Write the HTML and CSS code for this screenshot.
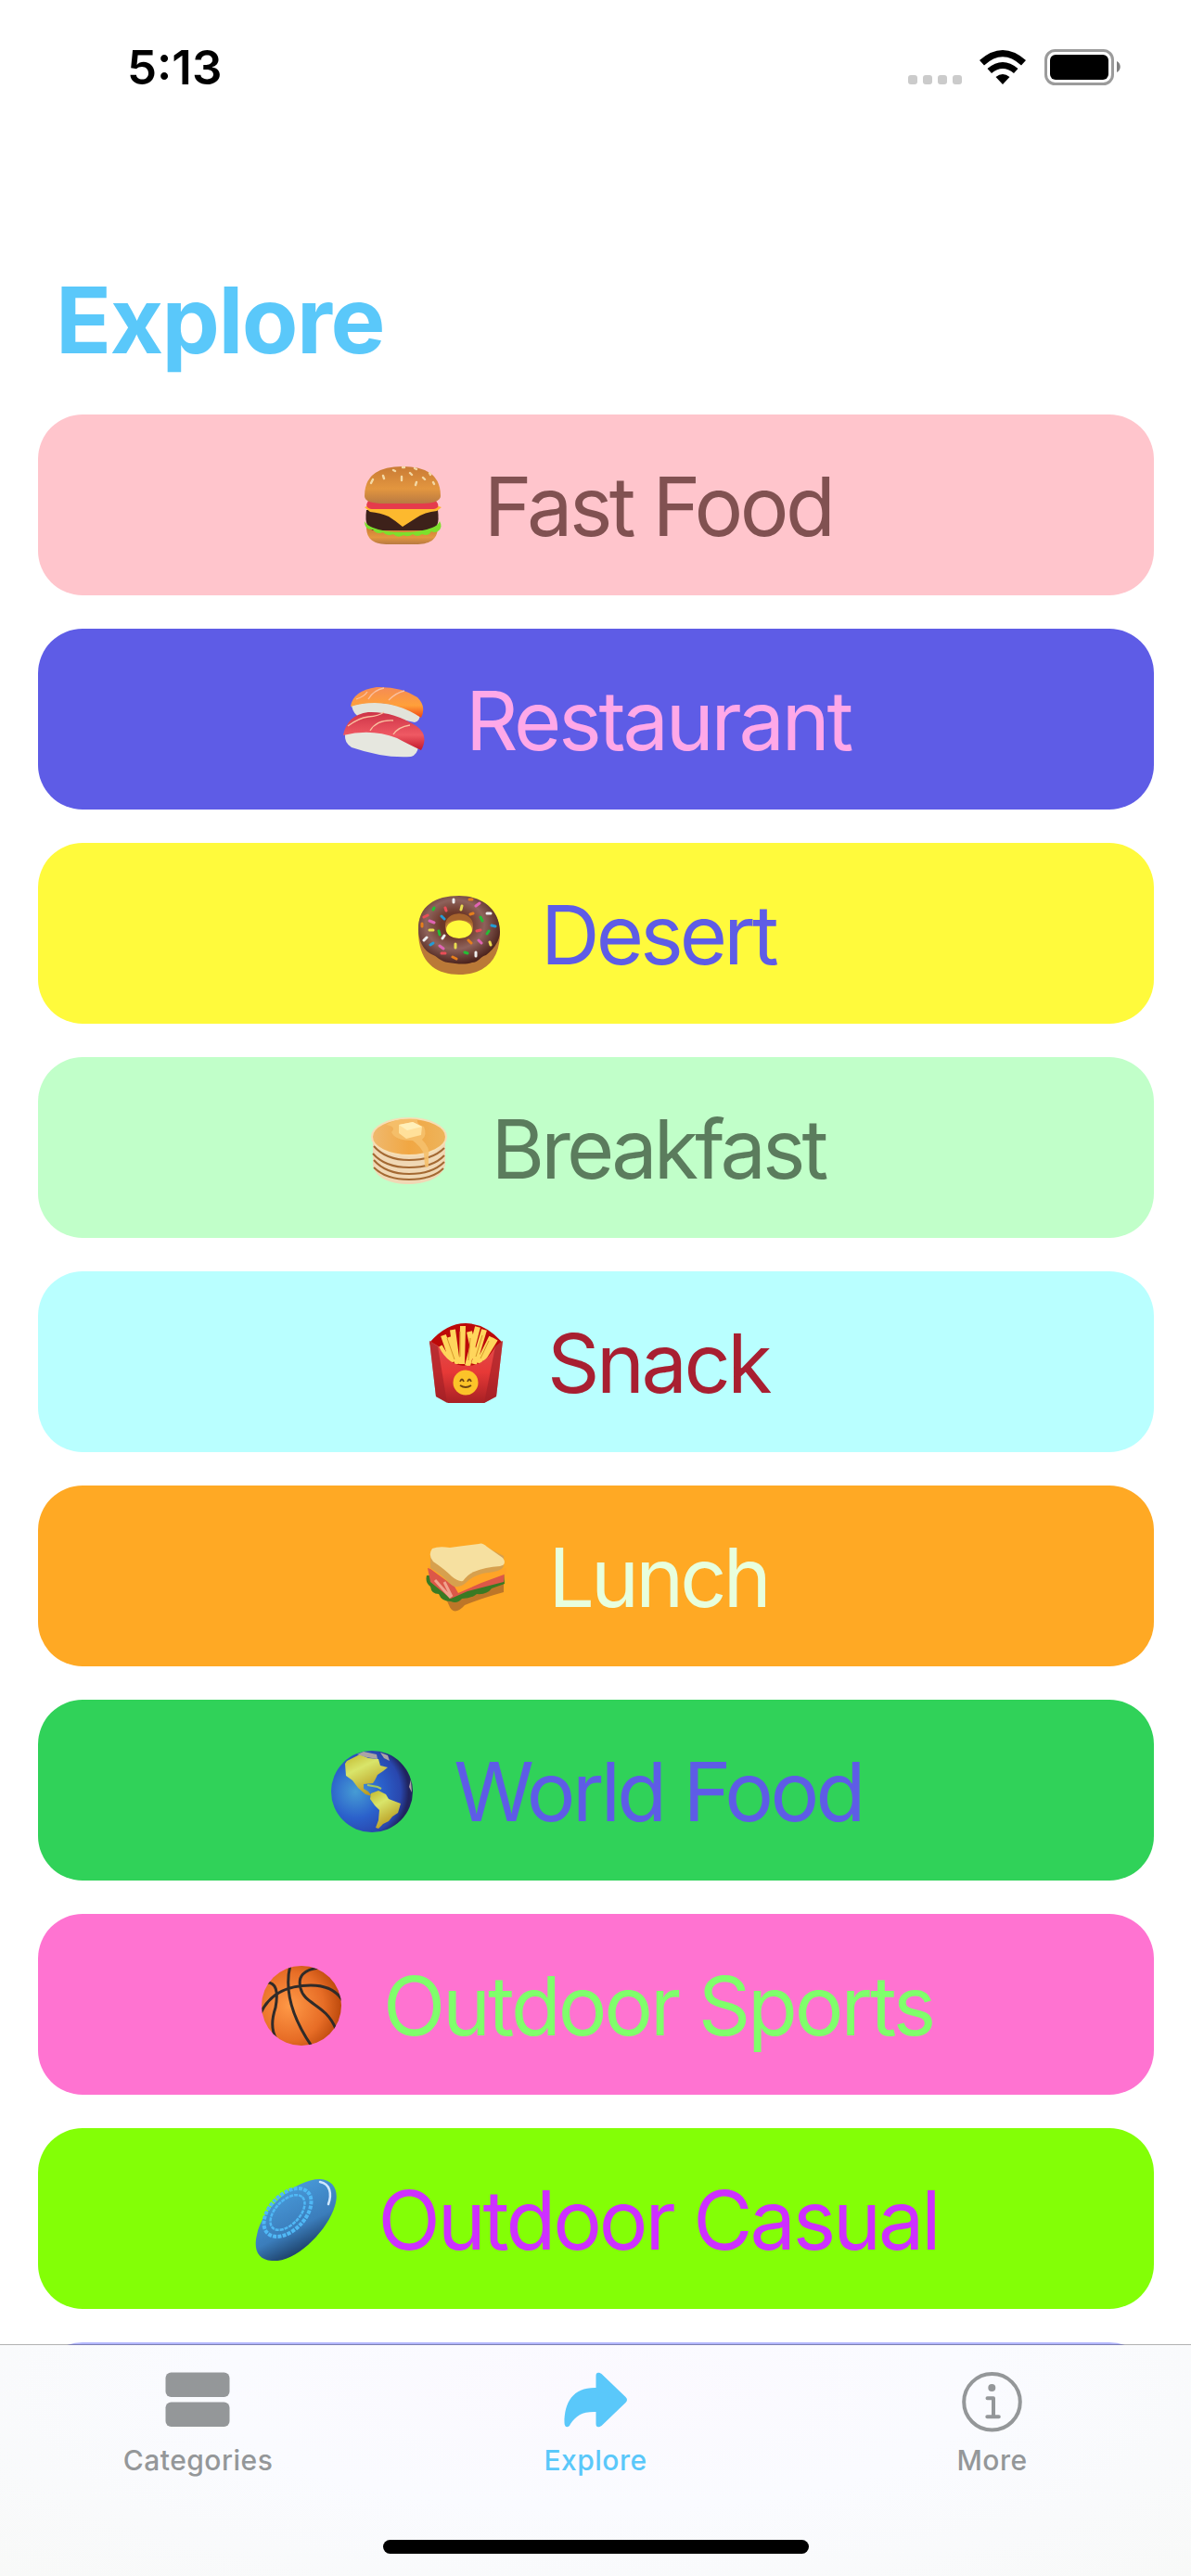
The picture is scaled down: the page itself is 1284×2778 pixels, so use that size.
FILE: index.html
```
<!DOCTYPE html>
<html lang="en">
<head>
<meta charset="utf-8">
<title>Explore</title>
<link rel="stylesheet" href="styles.css">
</head>
<body>
<div class="screen">
  <header class="status">
    <span class="time">5:13</span>
    <span class="status-icons">
      <svg class="signal" viewBox="0 0 58 10" fill="#cbcbcb"><rect width="10" height="10" rx="3"/><rect x="16" width="10" height="10" rx="3"/><rect x="32" width="10" height="10" rx="3"/><rect x="48" width="10" height="10" rx="3"/></svg>
      <svg class="wifi" viewBox="0 0 50 37"><path d="M0 11Q25-11 50 11L45 16.500Q25-2 5 16.500ZM8.500 20Q25 6 41.500 20L37 25Q25 15 13 25ZM17.500 29Q25 23 32.500 29L25 37Z"/></svg>
      <svg class="battery" viewBox="0 0 83 40"><rect x="1.500" y="1.500" width="72" height="36" rx="10" fill="none" stroke="#9b9b9b" stroke-width="3"/><rect x="6" y="6" width="63" height="27" rx="6"/><path d="M78 13c5 2 5 10 0 12z" fill="#808080"/></svg>
    </span>
  </header>
  <h1 class="title">Explore</h1>
  <main class="list">
    <a class="card fast-food">
      <svg class="emoji" viewBox="0 0 88 88">
        <defs><linearGradient id="bun" x2="0" y2="1"><stop stop-color="#c97b35"/><stop offset=".6" stop-color="#e3963f"/><stop offset="1" stop-color="#b97a42"/></linearGradient></defs>
        <path d="M5 66h77c0 15-10 19-24 19H29C13 85 5 80 5 66z" fill="url(#bun)"/>
        <path d="M5 48h77q3 22-9 22H15Q2 70 5 48z" fill="#3d211a"/>
        <path d="M3 60q3 5 9 7 12 5 32 5t32-5q6-2 8-7 4 7-2 11-4 2-7 0-3 6-10 3-5 4-10 0-5 4-10 1-6 4-11-1-7 3-11-2-7 3-11-3-9 1-9-9z" fill="#7de02c"/>
        <path d="M3 45l8-3h66l9 3-5 4q-13 1-23 8L44 66q-7-6-15-11-9-4-20-5z" fill="#fdb92e"/>
        <path d="M7 38h73q6 8-3 9H11q-9-1-4-9z" fill="#e53b4c"/>
        <path d="M3 33Q3 1 44 1t41 32c0 5-8 8-20 8H24C12 41 3 39 3 33z" fill="url(#bun)"/>
        <g stroke="#f3d8a4" stroke-width="2.400" stroke-linecap="round"><path d="M12 15l-2 4M23 11l1 3M34 5l2 1M43 12v4M52 8l2 2M59 18l-1 3M66 13l2 2M57 3l2 1M73 8l1 2M77 18l1 2M44 2h2"/></g>
      </svg><span>Fast Food</span></a>
    <a class="card restaurant">
      <svg class="emoji" viewBox="0 0 88 88">
        <defs><linearGradient id="salmon" x2="0" y2="1"><stop stop-color="#f58b55"/><stop offset=".6" stop-color="#ffa03a"/><stop offset="1" stop-color="#f04610"/></linearGradient><linearGradient id="tuna" x2="0" y2="1"><stop stop-color="#cd3347"/><stop offset=".6" stop-color="#ef5963"/><stop offset="1" stop-color="#c2182c"/></linearGradient></defs>
        <path d="M9 28q30-10 74 8 0 9-6 10-34-8-60-6-6-3-8-12z" fill="#e2e3da"/>
        <path d="M8 29Q10 12 36 8q26-1 44 11 10 10 4 22Q60 25 34 25 20 25 8 29z" fill="url(#salmon)"/>
        <path d="M2 59q-1 9 7 14 35 12 64 10 7-2 8-11Q44 43 2 59z" fill="#e6e7df"/>
        <path d="M0 60Q4 38 27 35q27-1 52 15 14 10 5 26Q69 69 58 63 30 52 0 60z" fill="url(#tuna)"/>
        <g fill="none" stroke="#fac0a0" stroke-width="1.300"><path d="M27 21q6-10 17-12M49 22q8-8 17-10M14 21q9-3 12-8M5 50q12-9 22-10 12-1 17-5M29 55q7-12 25-11M54 59q5-8 18-10"/></g>
      </svg><span>Restaurant</span></a>
    <a class="card desert">
      <svg class="emoji" viewBox="0 0 88 88">
        <defs><radialGradient id="glaze" cx=".45" cy=".42" r=".58"><stop offset=".3" stop-color="#6b3728"/><stop offset=".62" stop-color="#8e625b"/><stop offset="1" stop-color="#4d241d"/></radialGradient></defs>
        <path fill-rule="evenodd" d="M0 40C0 12 17 5 44 5s44 13 44 37c0 30-17 45-44 45S0 72 0 40zm30-1c0 12 28 12 28 0 0-14-28-14-28 0z" fill="#ba7937"/>
        <path fill-rule="evenodd" d="M0 38C0 13 18 2 44 2s44 16 44 39c0 10-8 20-15 25-6 1-8 8-15 8-8 3-18 1-26 0-8-1-12-7-18-9C6 61 0 51 0 38zm29-2c0 16 30 16 30 0 0-19-30-19-30 0z" fill="url(#glaze)"/>
        <path d="M29 34c0-17 30-17 30 0-3-8-27-8-30 0z" fill="#a6642d"/>
        <g stroke-width="3" stroke-linecap="round"><path stroke="#eee" d="M38 6v3M74 21h4M6 50l3-3M26 48l2-3M62 63v4"/><path stroke="#e94e57" d="M6 25l4-2M29 15l1 3M63 40l4-1M25 64h4"/><path stroke="#24bd34" d="M16 17l1-2M67 25l2 4M22 40l1 4M74 43l2-3M50 63l3 1"/><path stroke="#e8dc4f" d="M47 13l-1 4M12 39h4M40 54v4M77 52l1 3"/><path stroke="#e064b3" d="M62 13l4-3M12 29l5 2M65 50l3 3M23 56l4 3"/><path stroke="#249bd4" d="M25 24l3 3M79 34l4 1M13 55l3-2"/><path stroke="#e67e1c" d="M55 6h3M4 32v3M56 22l3-1M54 50l3 3M37 68l4 2"/></g>
      </svg><span>Desert</span></a>
    <a class="card breakfast">
      <svg class="emoji" viewBox="0 0 88 88">
        <defs><linearGradient id="cake"><stop stop-color="#efb96f"/><stop offset=".5" stop-color="#f1a743"/><stop offset="1" stop-color="#edb45c"/></linearGradient></defs>
        <path d="M4 33v29c4 16 23 20 39 20s36-6 39-21V31z" fill="#f0d8b5"/>
        <g fill="none" stroke="#a46932" stroke-width="2"><path d="M5 41q13 15 38 15t38-13M4 49q13 15 39 15t38-13M5 56q13 15 38 15t38-13M5 64q13 13 38 13t37-12"/></g>
        <ellipse cx="43" cy="31" rx="40" ry="20" fill="url(#cake)" stroke="#f6deb5" stroke-width="2"/>
        <path d="M18 18q13-8 34-6-1 6 7 8 4 9-2 14 9 9 7 17v11q-2 4-4 0l-1-13q-4-8-12-14-19 0-23-9 6-6-6-8z" fill="#f5c06b" opacity=".9"/>
        <path d="M32 18l15-3 10 5-1 9-16 4-8-6z" fill="#ffe09a"/><path d="M32 18l15-3 10 5-16 4z" fill="#fff0b9"/>
      </svg><span>Breakfast</span></a>
    <a class="card snack">
      <svg class="emoji" viewBox="0 0 88 88">
        <defs><linearGradient id="box" x2="0" y2="1"><stop stop-color="#e04c4d"/><stop offset=".5" stop-color="#e73937"/><stop offset="1" stop-color="#a82024"/></linearGradient></defs>
        <path d="M5 22Q23 1 44 1t39 20l-8 26H14z" fill="#bc0909"/>
        <g stroke="#ffd65c" stroke-width="6"><path d="M20 14l10 29M30 8l5 37M41 4l-1 41M57 5L46 47M64 8L53 45M72 16L58 44M16 26l10 17M76 18L62 41M48 10l7 32M26 16l10 28"/></g><g stroke="#d7972a" stroke-width="1"><path d="M24 17l8 23M38 10v27M49 17l-2 24M62 14l-7 23M69 20l-9 19"/></g>
        <path d="M5 20l10 6q10 21 30 21t31-21l8-6-7 60-13 7H25l-13-7z" fill="url(#box)"/>
        <path d="M5 20l9 6 10 61-12-7zm79 0l-8 6-12 61 13-7z" fill="#a32026" opacity=".65"/>
        <circle cx="44" cy="65" r="13.500" fill="#fcc329"/><g fill="none" stroke="#704411" stroke-width="1.800"><path d="M38 64q2-5 4 0M46 64q2-5 4 0M38 68q6 4 12 0"/></g>
      </svg><span>Snack</span></a>
    <a class="card lunch">
      <svg class="emoji" viewBox="0 0 88 88">
        <path d="M3 47q13 6 22 27c3 9 10 8 17 0q17-7 42-14V42z" fill="#bd7628"/>
        <path d="M1 42q-2 8 4 12 1 8 9 8 3 8 13 8 7 3 12-3 10 0 16-5 11 1 16-6l14-5-1-12z" fill="#397a23"/>
        <path d="M2 34l3 15 22 18 18-8 39-10 1-12-42 8z" fill="#dc5748"/><path d="M10 47l17 19M20 49l8 16" stroke="#f0a28d" stroke-width="3"/>
        <path d="M1 32l30 22 4 7 25-11 27-10v-6L45 42z" fill="#ffa427"/>
        <path d="M5 18v16q12 7 20 16 8 8 17 1 9-10 25-12 17-2 17-8V21L59 8 25 20z" fill="#d7a04e"/>
        <path d="M7 13q7-3 19-1Q43 10 57 8q4-2 9 3l17 12q5 7-3 9-16 1-28 6-6 2-12 10-5 1-12-5-8-8-20-16-6-7-1-14z" fill="#f6e0a0"/>
      </svg><span>Lunch</span></a>
    <a class="card world-food">
      <svg class="emoji" viewBox="0 0 88 88">
        <defs><radialGradient id="sea" cx=".3" cy=".5" r=".65"><stop stop-color="#469cd4"/><stop offset=".5" stop-color="#2b61cb"/><stop offset=".85" stop-color="#2947ae"/><stop offset="1" stop-color="#20245f"/></radialGradient><linearGradient id="land" x2=".5" y2="1"><stop stop-color="#c2b72d"/><stop offset=".4" stop-color="#d9e56a"/><stop offset="1" stop-color="#b9981f"/></linearGradient></defs>
        <circle cx="44" cy="44" r="44" fill="url(#sea)"/>
        <path d="M17 11l14-7 9 4 11 1 2 7 8 2-5 4-6 4-3 6-2 3-10 1v5l5 3 4 5-7-2-8-7-6-8-7-5-1-13z" fill="url(#land)"/>
        <path d="M43 46l8-3 8 4 3 5 13 5-3 10-6 4-4 5-6 3-5 5-3-1 3-8 1-11-5-5-5-7z" fill="url(#land)"/><path d="M28 4l7-3 14 3 1 5-12-2zm25-2l8 3 2 6-6-3zM86 31l1 14-3-6z" fill="#aaa4a4"/><path d="M39 37l11 2 4 2" stroke="#a5c85e" stroke-width="2" fill="none"/>
      </svg><span>World Food</span></a>
    <a class="card outdoor-sports">
      <svg class="emoji" viewBox="0 0 88 88">
        <defs><radialGradient id="ball" cx=".35" cy=".5" r=".66"><stop stop-color="#ff9947"/><stop offset=".65" stop-color="#e76d26"/><stop offset="1" stop-color="#bb480b"/></radialGradient><clipPath id="ball-clip"><circle cx="44" cy="44" r="43"/></clipPath></defs>
        <circle cx="44" cy="44" r="43" fill="url(#ball)"/><g clip-path="url(#ball-clip)" fill="none" stroke="#302b29" stroke-width="3"><path d="M0 52Q14 22 54 22q24 0 34 16M32 0Q22 40 56 89M63 3Q38 6 43 25c4 18 27 17 38 44M7 19q14 0 9 27-7 21 1 34"/></g>
      </svg><span>Outdoor Sports</span></a>
    <a class="card outdoor-casual">
      <svg class="emoji" viewBox="0 0 88 88">
        <defs><linearGradient id="disc" x1=".3" y1=".1" x2=".7" y2=".9"><stop stop-color="#499bdb"/><stop offset=".6" stop-color="#3b7dbb"/><stop offset="1" stop-color="#173458"/></linearGradient></defs>
        <path d="M2 60C7 32 43 0 70 0c15 1 21 13 16 29C78 56 43 91 18 88 3 87-2 76 2 60z" fill="url(#disc)"/>
        <path d="M70 3c11 2 13 13 9 24" fill="none" stroke="#d0e9ff" stroke-width="2.500" stroke-linecap="round"/>
        <g fill="none" stroke="#50b8f5"><ellipse cx="35" cy="36" rx="31" ry="19" transform="rotate(-46 35 36)" stroke-width="4" stroke-dasharray="4 1.300"/><ellipse cx="35" cy="36" rx="23" ry="13" transform="rotate(-46 35 36)" stroke-width="2.500" stroke-dasharray="4 1"/></g>
      </svg><span>Outdoor Casual</span></a>
    <a class="card next"></a>
  </main>
  <nav class="tabs">
    <a class="tab"><svg class="tab-icon" viewBox="0 0 72 68" fill="currentColor"><rect x="1.500" y="1.500" width="69" height="26.500" rx="6"/><rect x="1.500" y="33.500" width="69" height="26.500" rx="6"/></svg><span>Categories</span></a>
    <a class="tab active"><svg class="tab-icon" viewBox="0 0 72 68" fill="currentColor"><path d="M36.500 18V5c0-4 3-4 6-2l26 25q3 3 0 6L42.500 59c-3 2-6 2-6-2V44C22 43.500 15 48 9 57c-2 5-6.500 4-6.500-1C2.500 33 12 17.500 36.500 18z"/></svg><span>Explore</span></a>
    <a class="tab"><svg class="tab-icon" viewBox="0 0 72 68"><circle cx="35.500" cy="33.300" r="30.300" fill="none" stroke="currentColor" stroke-width="4"/><circle cx="35.300" cy="18" r="4" fill="currentColor"/><path d="M30.500 29.300h6.500v20M30.300 49.300h12.500" fill="none" stroke="currentColor" stroke-width="4" stroke-linecap="round" stroke-linejoin="round"/></svg><span>More</span></a>
    <div class="home-bar"></div>
  </nav>
</div>
</body>
</html>
```
FILE: styles.css
```
* { box-sizing: border-box; }
body { margin: 0; background: #fff; font-family: Inter, "Liberation Sans", sans-serif; }
svg { display: block; }
.screen { width: 1284px; height: 2778px; display: flex; flex-direction: column; overflow: hidden; }
.status { height: 144px; flex: none; display: flex; justify-content: space-between; padding: 0 75px 0 137px; }
.time { font-size: 51px; line-height: 60px; font-weight: 600; margin-top: 43px; }
.status-icons { display: flex; align-items: flex-start; padding-top: 53px; }
.signal { width: 58px; height: 10px; margin: 28px 19px 0 0; }
.wifi { width: 50px; height: 37px; margin: 1px 20px 0 0; }
.battery { width: 83px; height: 40px; }
.title { margin: 0; flex: none; height: 303px; padding: 141px 0 0 60px; font-size: 99px; line-height: 120px; font-weight: 700; letter-spacing: -1.5px; color: #5ac8fa; }
.list { flex: 1; min-height: 0; overflow: hidden; display: flex; flex-direction: column; gap: 36px; padding: 0 40px 0 41px; }
.card { flex: none; height: 195px; border-radius: 48px; display: flex; justify-content: center; align-items: center; gap: 44px; font-size: 88px; line-height: 108px; letter-spacing: -3.5px; white-space: nowrap; padding: 2px 4px 0 0; }
.emoji { width: 88px; height: 88px; flex: none; margin-left: 6px; }
.fast-food { background: #ffc5cc; color: #815151; }
.restaurant { background: #5e5ce6; color: #ffa8e8; letter-spacing: -3.2px; }
.desert { background: #fffa3c; color: #5e5ce6; letter-spacing: -3.8px; }
.breakfast { background: #c1ffc9; color: #5b7c5d; letter-spacing: -3.9px; }
.snack { background: #b9ffff; color: #a81f31; }
.lunch { background: #ffa924; color: #e8ffdd; letter-spacing: -3.9px; }
.world-food { background: #30d259; color: #5e5ce6; letter-spacing: -3.7px; }
.outdoor-sports { background: #ff73d1; color: #7fff6b; letter-spacing: -3.1px; }
.outdoor-casual { background: #83ff06; color: #cd30ff; letter-spacing: -3.1px; }
.next { background: #b3b7ff; }
.tabs { position: relative; flex: none; height: 250px; margin-top: -1px; border-top: 1px solid rgba(0, 0, 0, .3); background: radial-gradient(ellipse at 50% 20%, #fbf9ff 0, #fafbff 45%, #f8f9f8 100%) padding-box; display: grid; grid-template-columns: 427px 430px 425px; grid-template-rows: 186px 1fr; justify-items: center; }
.tab { color: #949799; display: flex; flex-direction: column; align-items: center; padding-top: 28px; font-size: 30px; line-height: 36px; font-weight: 500; letter-spacing: .5px; }
.tab-icon { width: 72px; height: 68px; margin-bottom: 10px; }
.tab.active { color: #5ac8fa; }
.home-bar { grid-column: 1 / 4; width: 459px; height: 15px; border-radius: 8px; background: #000; margin: 24px 0 0 2px; }
```
